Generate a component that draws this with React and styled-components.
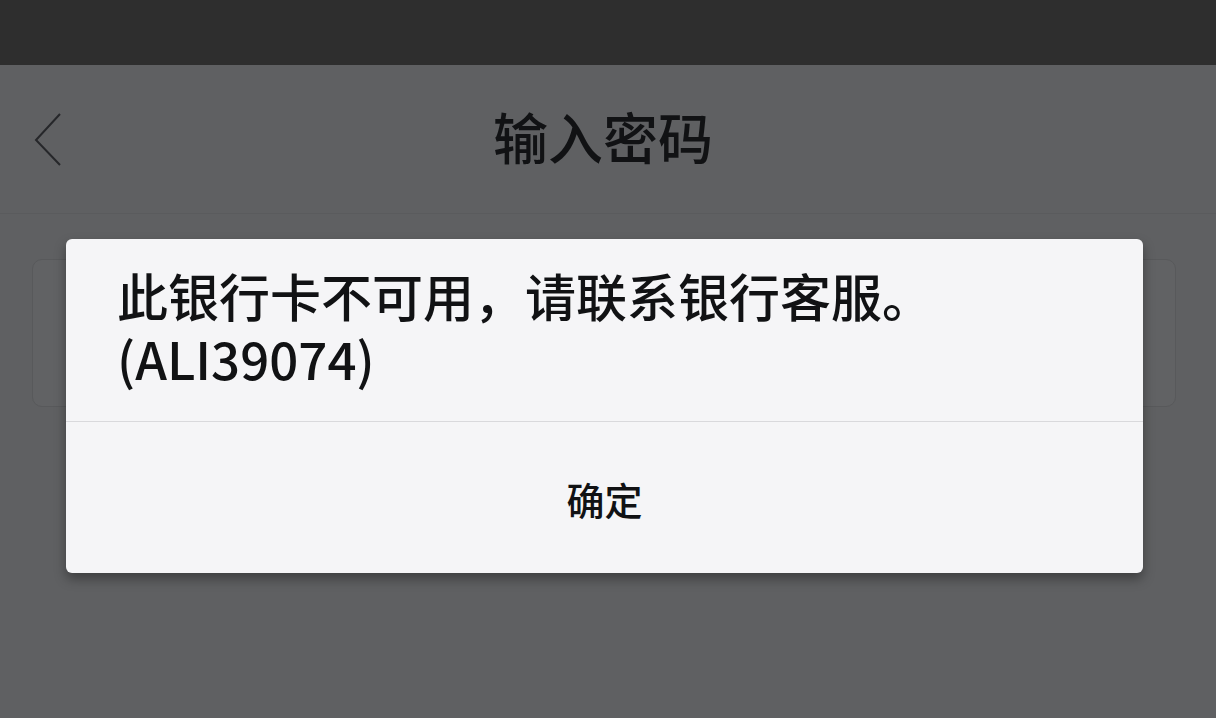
import React from 'react';
import styled, { createGlobalStyle } from 'styled-components';

const GlobalStyle = createGlobalStyle`
  html, body {
    margin: 0;
    padding: 0;
    background: #5f6062;
  }
  body {
    font-family: "Noto Sans CJK SC", "Noto Sans", sans-serif;
  }
`;

function App() {
  return (
    <Page>
      <GlobalStyle />
      <StatusBar />
      <Screen>
        <NavBar>
          <BackBtn>
            <svg width="30" height="56" viewBox="0 0 30 56">
              <polyline points="27,3 3,29 27,54" fill="none" stroke="#26272a" strokeWidth="2" />
            </svg>
          </BackBtn>
          <Title>输入密码</Title>
        </NavBar>
        <InputCard />
        <Dialog>
          <Message>
            此银行卡不可用，请联系银行客服。
            <br />
            (ALI39074)
          </Message>
          <ConfirmBtn>确定</ConfirmBtn>
        </Dialog>
      </Screen>
    </Page>
  );
}

export default App;

const Page = styled.div`
  width: 1216px;
  height: 718px;
  display: flex;
  flex-direction: column;
  overflow: hidden;
`;

const StatusBar = styled.div`
  height: 65px;
  background: #2e2e2e;
  flex-shrink: 0;
`;

const Screen = styled.div`
  position: relative;
  flex: 1;
  background: #5f6062;
  display: flex;
  flex-direction: column;
`;

const NavBar = styled.div`
  height: 148px;
  display: flex;
  align-items: center;
  justify-content: center;
  position: relative;
  border-bottom: 1px solid #5a5b5d;
`;

const BackBtn = styled.div`
  position: absolute;
  left: 33px;
  top: 46px;
  display: flex;
`;

const Title = styled.div`
  font-size: 55px;
  font-weight: 500;
  color: #111214;
  line-height: 1;
  margin: -8px 10px 0 0;
`;

const InputCard = styled.div`
  margin: 45px 40px 0 32px;
  height: 146px;
  border: 1px solid #58595b;
  border-radius: 10px;
  background: #616264;
`;

const Dialog = styled.div`
  position: absolute;
  left: 66px;
  top: 174px;
  width: 1077px;
  height: 334px;
  background: #f5f5f7;
  border-radius: 6px;
  box-shadow: 0 6px 12px rgba(0, 0, 0, 0.35);
  display: flex;
  flex-direction: column;
`;

const Message = styled.div`
  padding: 25px 40px 31px 51px;
  font-size: 51px;
  font-weight: 500;
  line-height: 63px;
  color: #111214;
  border-bottom: 1px solid #d9d9dc;
`;

const ConfirmBtn = styled.div`
  flex: 1;
  display: flex;
  align-items: center;
  justify-content: center;
  font-size: 38px;
  font-weight: 500;
  color: #111214;
  padding-top: 2px;
`;
